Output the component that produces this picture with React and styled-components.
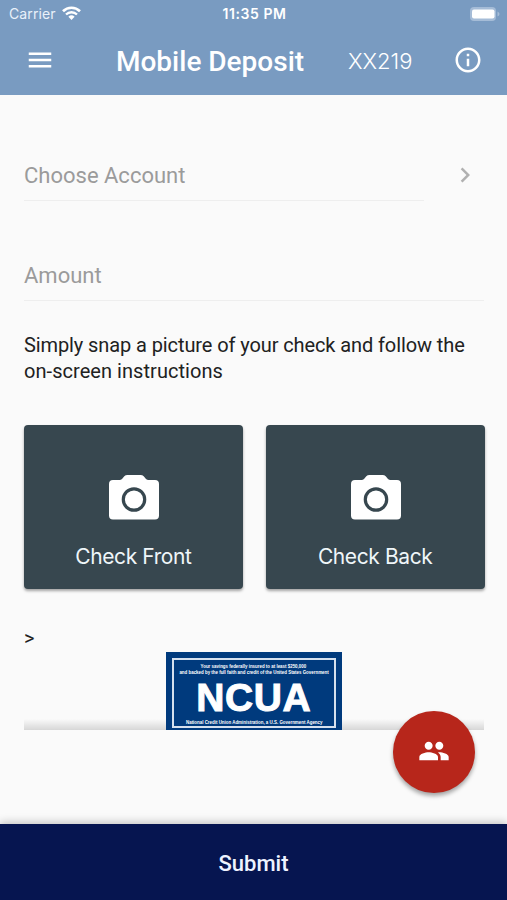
import styled, { createGlobalStyle } from "styled-components";
import { MdChevronRight, MdInfoOutline, MdMenu, MdPeople } from "react-icons/md";

const GlobalStyle = createGlobalStyle`
  body {
    margin: 0;
    background: #fafafa;
  }
  * {
    box-sizing: border-box;
  }
`;

const Screen = styled.div`
  position: relative;
  display: flex;
  flex-direction: column;
  height: 900px;
  overflow: hidden;
  background: #fafafa;
  color: #212121;
  font-family: Roboto, "Liberation Sans", sans-serif;
  font-size: 20px;
`;

const Header = styled.header`
  height: 95px;
  flex-shrink: 0;
  background: #799bc1;
  color: #fff;
`;

const StatusBar = styled.div`
  display: grid;
  grid-template-columns: 1fr auto 1fr;
  align-items: center;
  height: 28px;
  padding: 0 7px 0 9px;
  font-family: Inter, sans-serif;
  font-size: 14px;
  line-height: 28px;
`;

const Carrier = styled.div`
  display: flex;
  align-items: center;
  gap: 6px;
  color: #e9f1fa;
  letter-spacing: 0.1px;

  svg {
    margin-top: -2px;
  }
`;

const Clock = styled.div`
  font-size: 14px;
  font-weight: 600;
  letter-spacing: 0.55px;
`;

const BatteryIcon = styled.svg`
  justify-self: end;
  margin-top: -1px;
`;

const Toolbar = styled.div`
  display: flex;
  align-items: center;
  height: 64px;
  padding: 0 24px 0 25px;
`;

const IconButton = styled.button`
  display: flex;
  padding: 0;
  border: 0;
  background: none;
  color: inherit;
  font-size: 30px;
`;

const Title = styled.h1`
  width: 232px;
  margin: 3px 0 0 61px;
  font-size: 28px;
  font-weight: 500;
  line-height: 32px;
  white-space: nowrap;
`;

const AccountTag = styled.div`
  flex: 1;
  padding-top: 1px;
  font-family: Inter, sans-serif;
  font-size: 22px;
  font-weight: 300;
`;

const Content = styled.main`
  flex: 1;
  padding: 0 22.5px 0 24px;
`;

const Field = styled.div`
  display: flex;
  align-items: flex-end;
  height: ${(props) => props.$height}px;
`;

const FieldLabel = styled.div`
  width: ${(props) => props.$width}px;
  padding-bottom: 10px;
  border-bottom: 1px solid #eee;
  color: #9b9b9b;
  font-size: 22px;
  line-height: 28px;
`;

const FieldArrow = styled(MdChevronRight)`
  margin: 0 0 11px 26px;
  color: #b0b0b0;
  font-size: 30px;
`;

const Hint = styled.p`
  margin: 31px 0 0;
  line-height: 26px;
`;

const HintLine = styled.span`
  display: block;
  letter-spacing: ${(props) => props.$spacing}px;
`;

const Cards = styled.div`
  display: grid;
  grid-template-columns: 1fr 1fr;
  gap: 23px;
  margin-top: 41px;
`;

const Card = styled.button`
  display: flex;
  flex-direction: column;
  align-items: center;
  height: 164px;
  padding: 50px 0 0;
  border: 0;
  border-radius: 4px;
  background: #37474f;
  box-shadow: 0 2px 3px rgba(0, 0, 0, 0.35);
  color: #eff6f9;
  font-family: Inter, sans-serif;
  font-size: 21px;
  letter-spacing: -0.4px;
  line-height: 28px;

  svg {
    margin: 0 0 23px 1px;
  }
`;

const Caret = styled.div`
  margin-top: 36px;
  line-height: 26px;
`;

const InsuranceRow = styled.div`
  display: flex;
  justify-content: center;
  height: 78px;
  margin-top: 1px;
  padding-right: 1px;
  background: linear-gradient(to bottom, rgba(0, 0, 0, 0), rgba(0, 0, 0, 0.14))
    0 100% / 460px 11px no-repeat;
`;

const NcuaSign = styled.div`
  width: 176px;
  height: 78px;
  padding: 6px 6px 2px;
  background: #003a7d;
`;

const NcuaFrame = styled.div`
  display: flex;
  flex-direction: column;
  align-items: center;
  height: 70px;
  border: 2px solid #d5e0ee;
  color: #fff;
  font-family: "Liberation Sans", Arial, sans-serif;
  font-weight: 700;
  white-space: nowrap;
`;

const FinePrint = styled.div`
  margin-top: ${(props) => props.$top || 0}px;
  font-size: 5.4px;
  line-height: 6px;
  transform: scaleX(0.82);
`;

const NcuaName = styled.div`
  margin-top: 4px;
  font-size: 39px;
  line-height: 38px;
  letter-spacing: 0.6px;
  -webkit-text-stroke: 1px #fff;
`;

const ContactButton = styled.button`
  position: absolute;
  right: 32px;
  top: 711px;
  display: flex;
  align-items: center;
  justify-content: center;
  width: 82px;
  height: 82px;
  padding: 0 0 3px;
  border: 0;
  border-radius: 50%;
  background: #b7261b;
  box-shadow: 0 3px 4px rgba(0, 0, 0, 0.35);
  color: #fff;
  font-size: 32px;
`;

const SubmitButton = styled.button`
  height: 76px;
  flex-shrink: 0;
  padding: 2px 0 0;
  border: 0;
  background: #061550;
  box-shadow: 0 -2px 8px rgba(0, 0, 0, 0.22);
  color: #eef3ff;
  font-family: inherit;
  font-size: 22px;
  font-weight: 500;
`;

function WifiIcon() {
  return (
    <svg width="19" height="14" viewBox="0 0 19 14" fill="none">
      <path d="M1 5.2a12.2 12.2 0 0 1 17 0" stroke="#fff" strokeWidth="2.7" />
      <path d="M4 8.5a8 8 0 0 1 11 0" stroke="#fff" strokeWidth="2.4" />
      <path d="M9.5 14 6.4 10.8a4.5 4.5 0 0 1 6.2 0Z" fill="#fff" />
    </svg>
  );
}

function CameraIcon() {
  return (
    <svg width="50" height="45" viewBox="0 0 50 45">
      <path
        d="M18.5 0h13q2 0 3.2 1.2L37 4q1 1 2.500 1H46q4 0 4 4v31.5q0 4-4 4H4q-4 0-4-4V9q0-4 4-4h6.5q1.5 0 2.5-1l2.3-2.8Q16.5 0 18.5 0Z"
        fill="#fff"
      />
      <circle cx="25" cy="24.5" r="10.7" fill="none" stroke="#37474f" strokeWidth="3.2" />
    </svg>
  );
}

export default function App() {
  return (
    <>
      <GlobalStyle />
      <Screen>
        <Header>
          <StatusBar>
            <Carrier>
              Carrier
              <WifiIcon />
            </Carrier>
            <Clock>11:35 PM</Clock>
            <BatteryIcon width="30" height="14" viewBox="0 0 30 14">
              <rect width="26" height="14" rx="4" fill="#a5bcd7" />
              <rect x="2" y="2.5" width="22.5" height="9" rx="2" fill="#fff" />
              <path d="M27.5 4.5q2 1 2 2.5t-2 2.5Z" fill="#a5bcd7" />
            </BatteryIcon>
          </StatusBar>
          <Toolbar>
            <IconButton aria-label="Menu">
              <MdMenu />
            </IconButton>
            <Title>Mobile Deposit</Title>
            <AccountTag>XX219</AccountTag>
            <IconButton aria-label="Info">
              <MdInfoOutline />
            </IconButton>
          </Toolbar>
        </Header>
        <Content>
          <Field $height={106}>
            <FieldLabel $width={400}>Choose Account</FieldLabel>
            <FieldArrow />
          </Field>
          <Field $height={100}>
            <FieldLabel $width={460}>Amount</FieldLabel>
          </Field>
          <Hint>
            <HintLine $spacing={-0.1}>
              Simply snap a picture of your check and follow the
            </HintLine>
            <HintLine $spacing={0.05}>on-screen instructions</HintLine>
          </Hint>
          <Cards>
            <Card>
              <CameraIcon />
              Check Front
            </Card>
            <Card>
              <CameraIcon />
              Check Back
            </Card>
          </Cards>
          <Caret>&gt;</Caret>
          <InsuranceRow>
            <NcuaSign>
              <NcuaFrame>
                <FinePrint $top={3}>Your savings federally insured to at least $250,000</FinePrint>
                <FinePrint>
                  and backed by the full faith and credit of the United States Government
                </FinePrint>
                <NcuaName>NCUA</NcuaName>
                <FinePrint $top={2}>
                  National Credit Union Administration, a U.S. Government Agency
                </FinePrint>
              </NcuaFrame>
            </NcuaSign>
          </InsuranceRow>
        </Content>
        <ContactButton aria-label="Contacts">
          <MdPeople />
        </ContactButton>
        <SubmitButton>Submit</SubmitButton>
      </Screen>
    </>
  );
}
